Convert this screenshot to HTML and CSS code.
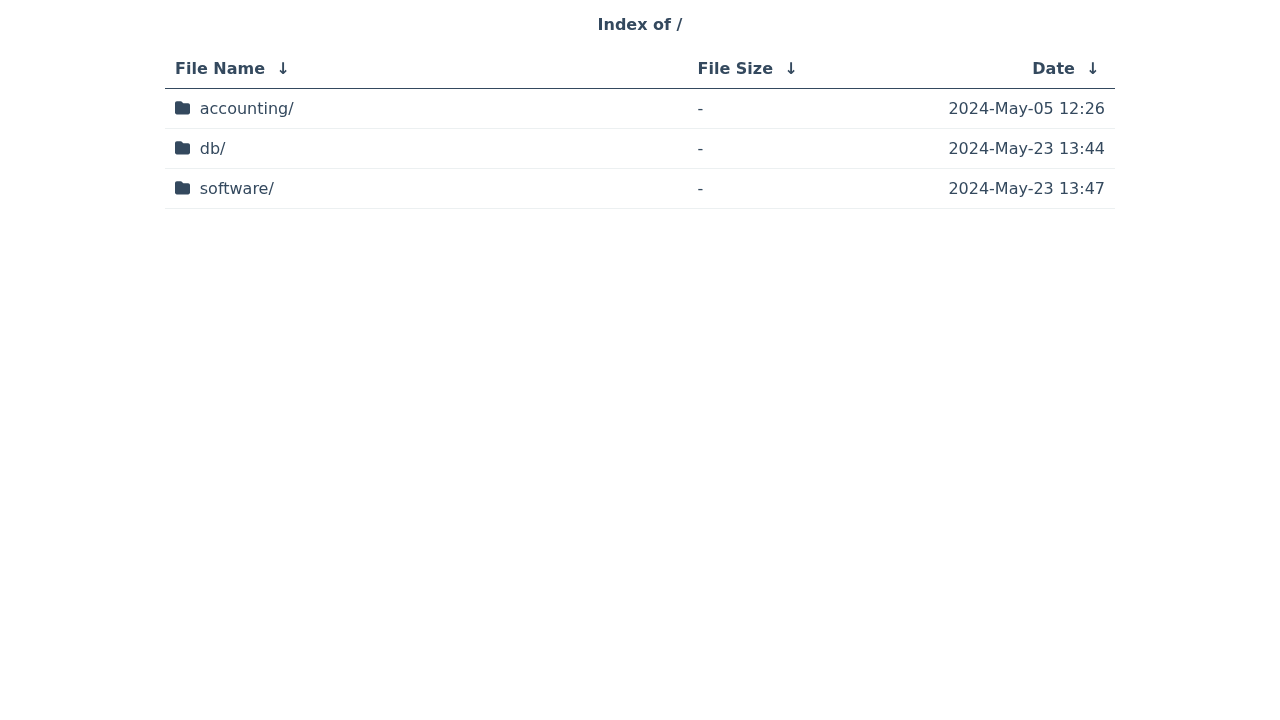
FILE: index.html
```html
<!DOCTYPE html>
<html lang="en">
<head>
<meta charset="utf-8">
<title>Index of /</title>
<link rel="stylesheet" href="styles.css">
</head>
<body>
<main class="page">
<h1 class="title">Index of /</h1>
<table class="listing">
<thead>
<tr>
<th class="col-name"><a href="#">File Name</a>&nbsp; <a href="#">↓</a></th>
<th class="col-size"><a href="#">File Size</a>&nbsp; <a href="#">↓</a></th>
<th class="col-date"><a href="#">Date</a>&nbsp; <a href="#">↓</a>&nbsp;</th>
</tr>
</thead>
<tbody>
<tr>
<td class="col-name"><a href="#" class="entry"><svg class="folder" viewBox="0 0 512 512"><path d="M64 480H448c35.300 0 64-28.700 64-64V160c0-35.300-28.700-64-64-64H288c-10.100 0-19.600-4.700-25.600-12.800L243.200 57.600C231.100 41.500 212.100 32 192 32H64C28.700 32 0 60.700 0 96V416c0 35.300 28.700 64 64 64z"/></svg><span>accounting/</span></a></td>
<td class="col-size">-</td>
<td class="col-date">2024-May-05 12:26</td>
</tr>
<tr>
<td class="col-name"><a href="#" class="entry"><svg class="folder" viewBox="0 0 512 512"><path d="M64 480H448c35.300 0 64-28.700 64-64V160c0-35.300-28.700-64-64-64H288c-10.100 0-19.600-4.700-25.600-12.800L243.200 57.600C231.100 41.500 212.100 32 192 32H64C28.700 32 0 60.700 0 96V416c0 35.300 28.700 64 64 64z"/></svg><span>db/</span></a></td>
<td class="col-size">-</td>
<td class="col-date">2024-May-23 13:44</td>
</tr>
<tr>
<td class="col-name"><a href="#" class="entry"><svg class="folder" viewBox="0 0 512 512"><path d="M64 480H448c35.300 0 64-28.700 64-64V160c0-35.300-28.700-64-64-64H288c-10.100 0-19.600-4.700-25.600-12.800L243.200 57.600C231.100 41.500 212.100 32 192 32H64C28.700 32 0 60.700 0 96V416c0 35.300 28.700 64 64 64z"/></svg><span>software/</span></a></td>
<td class="col-size">-</td>
<td class="col-date">2024-May-23 13:47</td>
</tr>
</tbody>
</table>
</main>
</body>
</html>
```
FILE: styles.css
```css
html, body { margin: 0; padding: 0; background: #fff; }
body {
  font-family: "DejaVu Sans", sans-serif;
  font-size: 16px;
  line-height: 24px;
  color: #34495e;
}
.page { width: 950px; margin: 0 auto; will-change: transform; }
.title {
  margin: 0;
  padding: 13px 0 12px;
  font-size: 16px;
  line-height: 24px;
  font-weight: 700;
  text-align: center;
}
.listing { width: 950px; border-collapse: separate; border-spacing: 0; table-layout: fixed; }
a { color: inherit; text-decoration: none; }
th, td { box-sizing: border-box; padding: 0 10px; height: 40px; font-size: 16px; line-height: 24px; text-align: left; }
th { font-weight: 700; border-bottom: 1px solid #34495e; }
td { border-bottom: 1px solid #ecf0f1; }
.col-name { width: 522.5px; }
.col-size { width: 197px; }
th.col-date, td.col-date { text-align: right; }
.entry { display: flex; align-items: center; gap: 9.75px; }
.folder { width: 15px; height: 15px; fill: #34495e; flex: none; transform: translateY(-0.6px); }
```
